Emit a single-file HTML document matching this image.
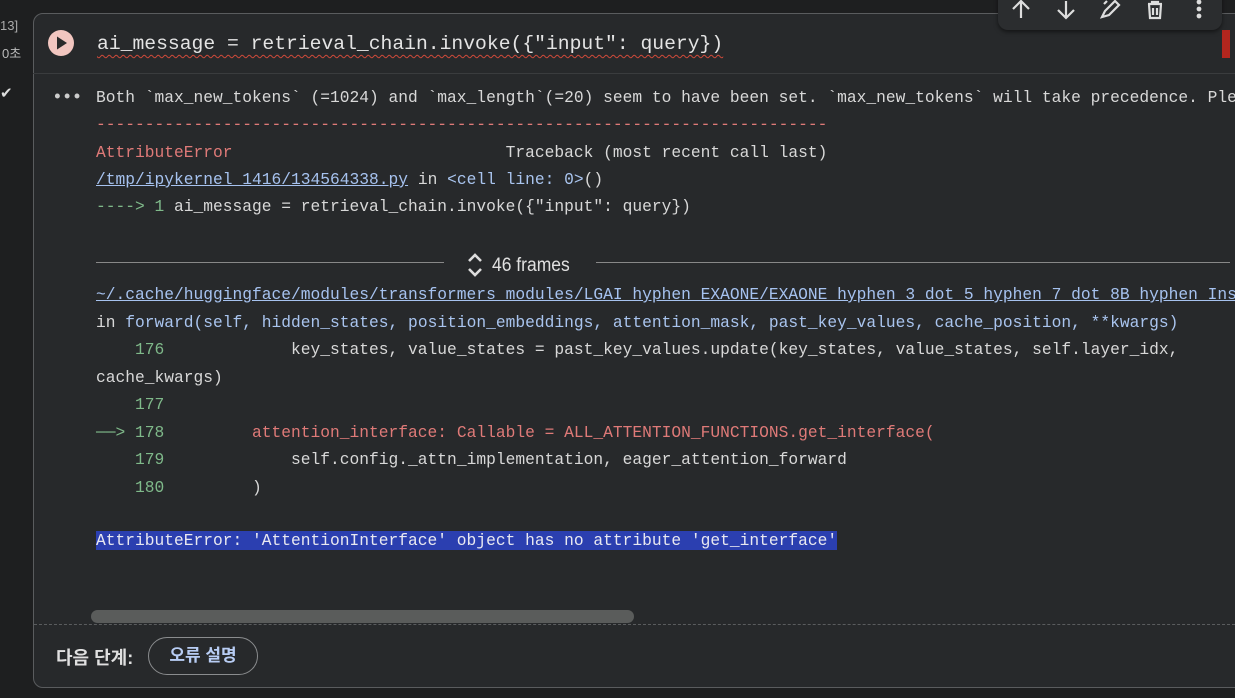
<!DOCTYPE html>
<html><head><meta charset="utf-8"><style>
html,body{margin:0;width:1235px;height:698px;overflow:hidden;}
body{background:#1e1f20;position:relative;font-family:"Liberation Mono",monospace;}
#w{position:absolute;left:0;top:0;width:1235px;height:698px;overflow:hidden;}
.cell{position:absolute;left:33px;top:13px;width:1230px;height:673px;border:1px solid #5a5c5e;border-radius:10px;background:#27292b;}
.hdr{position:absolute;left:33px;top:13px;width:1202px;height:60px;border-bottom:1px solid #3a3c3e;}
.l{position:absolute;left:96px;white-space:pre;font-size:16.25px;line-height:27px;height:27px;color:#d8d8d8;}
.r{color:#df7a78}.b{color:#a9c4ee}.g{color:#7fb98a}.u{text-decoration:underline;color:#a6c2ef}
.sel{background:#2b3fb0;color:#e8e8f0}
</style></head><body><div id="w">
<div style="position:absolute;left:0;top:18px;font:13px 'Liberation Sans',sans-serif;color:#aaa">13]</div>
<div style="position:absolute;left:2px;top:43px;font:13px 'Liberation Sans','Noto Sans CJK KR',sans-serif;color:#bbb">0초</div>
<div style="position:absolute;left:0;top:84px;font:15px 'Liberation Sans',sans-serif;color:#ddd">✔</div>
<div class="cell"></div>
<div class="hdr"></div>
<svg style="position:absolute;left:47px;top:29px" width="28" height="28"><circle cx="14" cy="14" r="13" fill="#f2c6c0"/><path d="M10 7.5 L20 14 L10 20.5Z" fill="#2a2a2a"/></svg>
<div style="position:absolute;left:97px;top:30px;font-size:19.7px;line-height:28px;color:#e4e4e4;white-space:pre;text-decoration:underline wavy #d04a3a;text-decoration-thickness:1px;text-underline-offset:5px">ai_message = retrieval_chain.invoke({"input": query})</div>
<div style="position:absolute;left:1222px;top:30px;width:8px;height:28px;background:#b3261e"></div>
<div style="position:absolute;left:998px;top:-12px;width:224px;height:42px;background:#2b2d2f;border-radius:10px;box-shadow:0 2px 4px rgba(0,0,0,.5)"></div>
<svg style="position:absolute;left:1008px;top:0" width="210" height="22" fill="none" stroke="#ddd" stroke-width="2.2"><path d="M13 18V2M5 9l8-8 8 8"/><path d="M58 1v16M50 10l8 8 8-8"/><path d="M94 17l3-6 10-10 4 4-10 10zM96 4l3-3"/><path d="M140 4h14M144 4v-2h6v2M141 4l1 14h10l1-14M145 8v7M149 8v7"/><circle cx="191" cy="2" r="1.3" fill="#ddd"/><circle cx="191" cy="9" r="1.3" fill="#ddd"/><circle cx="191" cy="16" r="1.3" fill="#ddd"/></svg>
<div style="position:absolute;left:52px;top:88px;font-size:18px;color:#ccc;letter-spacing:-1px">•••</div>
<div class="l" style="top:84px">Both `max_new_tokens` (=1024) and `max_length`(=20) seem to have been set. `max_new_tokens` will take precedence. Ple</div>
<div class="l r" style="top:111px">---------------------------------------------------------------------------</div>
<div class="l" style="top:139px"><span class="r">AttributeError</span>                            Traceback (most recent call last)</div>
<div class="l" style="top:166px"><span class="u">/tmp/ipykernel_1416/134564338.py</span> in <span class="b">&lt;cell line: 0&gt;</span>()</div>
<div class="l" style="top:193px"><span class="g">----&gt; 1</span> ai_message = retrieval_chain.invoke({"input": query})</div>
<div style="position:absolute;left:96px;top:262px;width:348px;height:1px;background:#888"></div>
<div style="position:absolute;left:596px;top:262px;width:634px;height:1px;background:#888"></div>
<svg style="position:absolute;left:466px;top:251px" width="18" height="28" fill="none" stroke="#ddd" stroke-width="2.6"><path d="M3 10l6-6 6 6M3 18l6 6 6-6"/></svg>
<div style="position:absolute;left:492px;top:255px;font:19px 'Liberation Sans',sans-serif;color:#e0e0e0;transform:scaleX(.92);transform-origin:left">46 frames</div>
<div class="l" style="top:281px"><span class="u">~/.cache/huggingface/modules/transformers_modules/LGAI_hyphen_EXAONE/EXAONE_hyphen_3_dot_5_hyphen_7_dot_8B_hyphen_Ins</span></div>
<div class="l" style="top:309px">in <span class="b">forward(self, hidden_states, position_embeddings, attention_mask, past_key_values, cache_position, **kwargs)</span></div>
<div class="l" style="top:336px"><span class="g">    176</span>             key_states, value_states = past_key_values.update(key_states, value_states, self.layer_idx,</div>
<div class="l" style="top:364px">cache_kwargs)</div>
<div class="l" style="top:391px"><span class="g">    177</span></div>
<div class="l" style="top:419px"><span class="g">──&gt; 178</span>         <span class="r">attention_interface: Callable = ALL_ATTENTION_FUNCTIONS.get_interface(</span></div>
<div class="l" style="top:446px"><span class="g">    179</span>             self.config._attn_implementation, eager_attention_forward</div>
<div class="l" style="top:474px"><span class="g">    180</span>         )</div>
<div class="l" style="top:527px"><span class="sel">AttributeError: 'AttentionInterface' object has no attribute 'get_interface'</span></div>
<div style="position:absolute;left:91px;top:610px;width:543px;height:13px;border-radius:7px;background:#5a5c5b"></div>
<div style="position:absolute;left:34px;top:624px;width:1201px;border-top:1px dashed #5a5c5e"></div>
<div style="position:absolute;left:56px;top:644px;font:bold 18px 'Liberation Sans','Noto Sans CJK KR',sans-serif;color:#e0e0e0">다음 단계:</div>
<div style="position:absolute;left:148px;top:637px;width:108px;height:36px;border:1px solid #8a8c8e;border-radius:19px;font:bold 17px 'Liberation Sans','Noto Sans CJK KR',sans-serif;color:#b8cdf4;text-align:center;line-height:36px">오류 설명</div>
</div></body></html>
